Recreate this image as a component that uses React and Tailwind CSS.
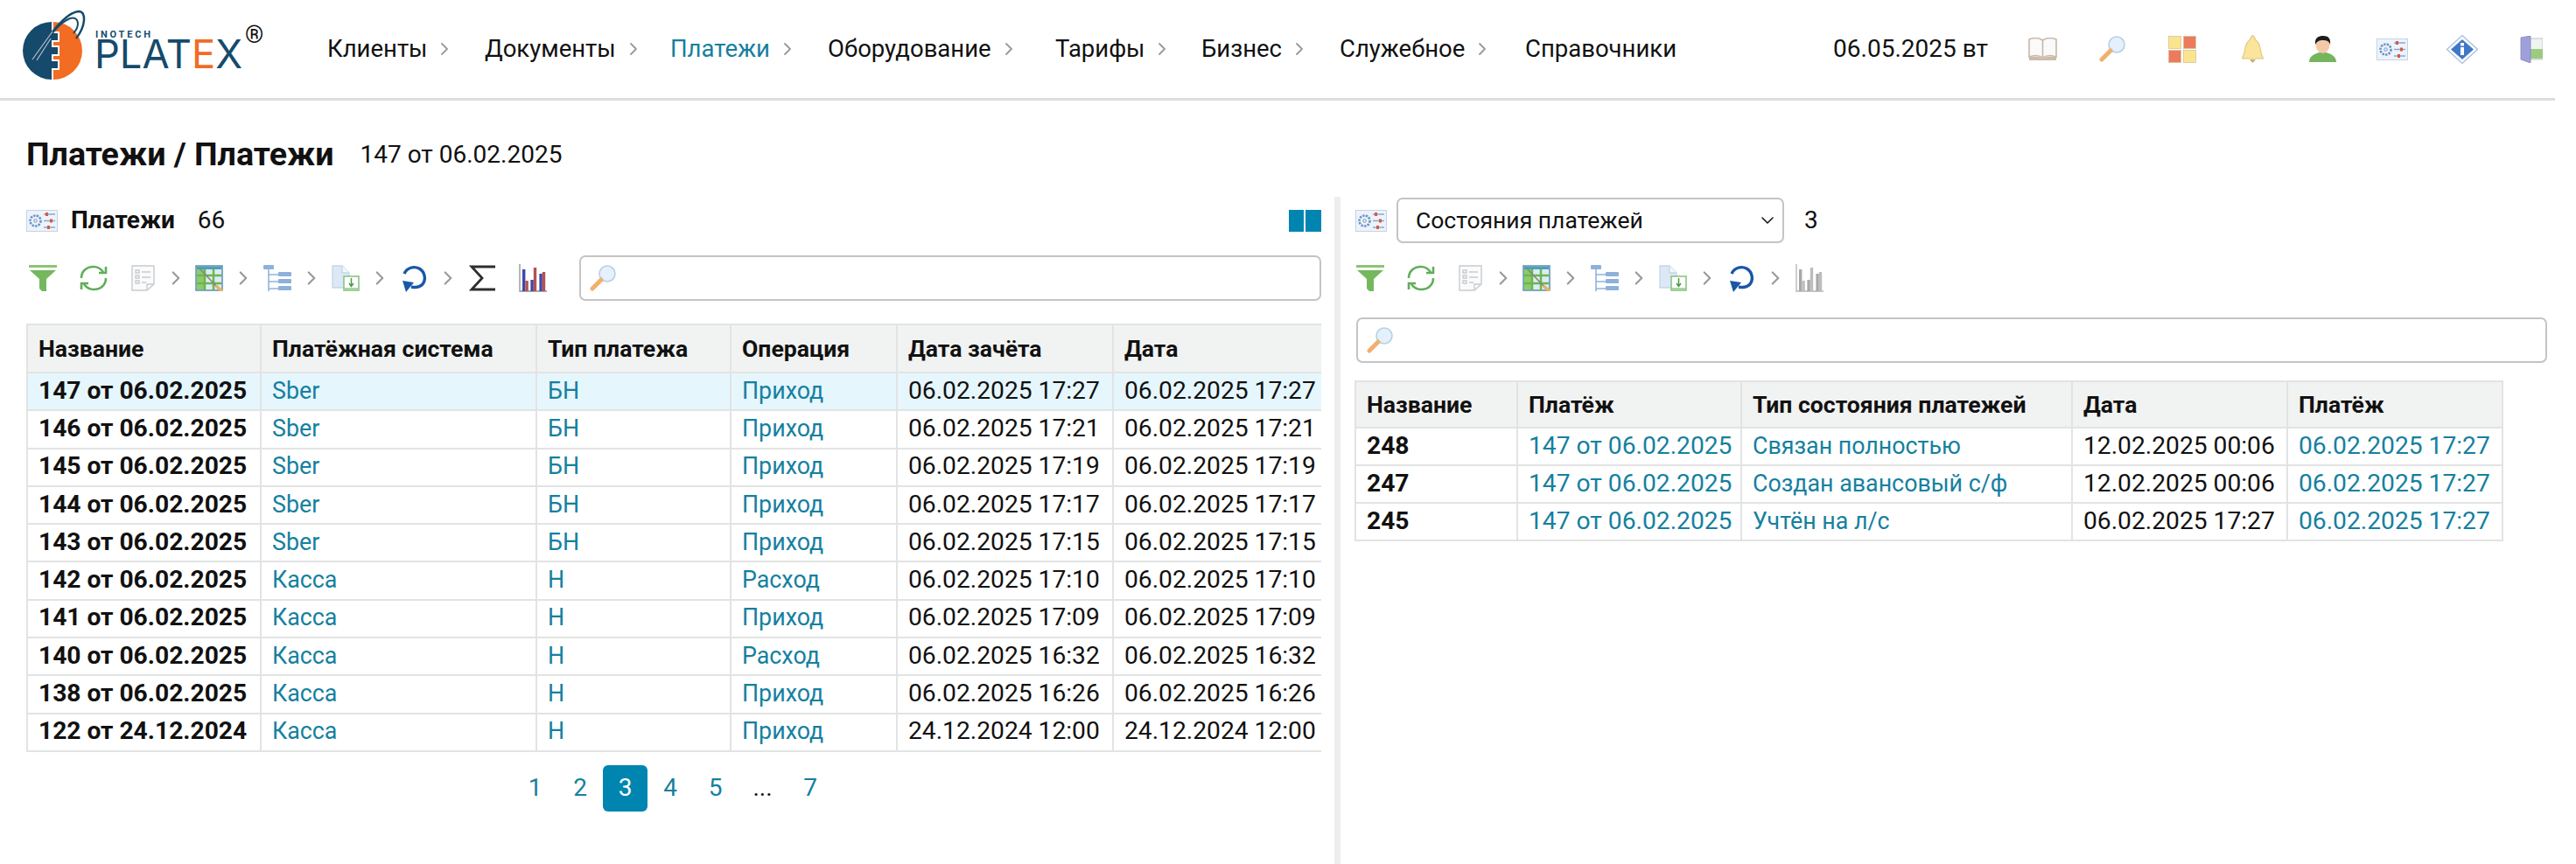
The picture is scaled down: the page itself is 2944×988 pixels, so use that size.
import { ChevronDown, ChevronRight } from 'lucide-react';

const navItems = [
    { label: 'Клиенты', width: 'w-[180px]' },
    { label: 'Документы', width: 'w-[212px]' },
    { label: 'Платежи', width: 'w-[180px]' },
    { label: 'Оборудование', width: 'w-[260px]' },
    { label: 'Тарифы', width: 'w-[167px]' },
    { label: 'Бизнес', width: 'w-[158px]' },
    { label: 'Служебное', width: 'w-[212px]' },
    { label: 'Справочники', width: '' },
];

const payments = [
    ['147 от 06.02.2025', 'Sber', 'БН', 'Приход', '06.02.2025 17:27'],
    ['146 от 06.02.2025', 'Sber', 'БН', 'Приход', '06.02.2025 17:21'],
    ['145 от 06.02.2025', 'Sber', 'БН', 'Приход', '06.02.2025 17:19'],
    ['144 от 06.02.2025', 'Sber', 'БН', 'Приход', '06.02.2025 17:17'],
    ['143 от 06.02.2025', 'Sber', 'БН', 'Приход', '06.02.2025 17:15'],
    ['142 от 06.02.2025', 'Касса', 'Н', 'Расход', '06.02.2025 17:10'],
    ['141 от 06.02.2025', 'Касса', 'Н', 'Приход', '06.02.2025 17:09'],
    ['140 от 06.02.2025', 'Касса', 'Н', 'Расход', '06.02.2025 16:32'],
    ['138 от 06.02.2025', 'Касса', 'Н', 'Приход', '06.02.2025 16:26'],
    ['122 от 24.12.2024', 'Касса', 'Н', 'Приход', '24.12.2024 12:00'],
];

const states = [
    ['248', 'Связан полностью', '12.02.2025 00:06'],
    ['247', 'Создан авансовый с/ф', '12.02.2025 00:06'],
    ['245', 'Учтён на л/с', '06.02.2025 17:27'],
];

const Logo = () => (
    <svg width="310" height="112" viewBox="0 0 310 112" className="shrink-0">
        <path d="M58 25 A33 33 0 0 0 58 91 V78 H65 V70 H58 V62 H65 V54 H58 V46 H65 V38 H58 Z" fill="#164a6c" transform="translate(1 0)" />
        <path d="M60 25 A33 33 0 0 1 60 91 V80 H67 V68 H60 V64 H67 V52 H60 V48 H67 V36 H60 Z" fill="#f26c24" transform="translate(1 0)" />
        <path d="M40 68 C54 40 76 14 90 13 C99 13 98 30 87 44" fill="none" stroke="#164a6c" strokeWidth="2.5" />
        <path d="M46 58 C58 38 70 25 80 21 C90 18 92 29 84 38" fill="none" stroke="#164a6c" strokeWidth="2" />
        <path d="M37 68 L60 36 M42 69 L58 44" stroke="#b4c0ca" strokeWidth="1.2" />
        <text x="109" y="43" fontFamily="Roboto, sans-serif" fontSize="11" fontWeight="700" fill="#164a6c" textLength="63" lengthAdjust="spacing">INOTECH</text>
        <text x="108" y="78" fontFamily="Inter, sans-serif" fontSize="45" fontWeight="400" fill="#164a6c" textLength="169" lengthAdjust="spacingAndGlyphs">PLAT<tspan fill="#f26c24">E</tspan>X</text>
        <text x="280" y="49" fontFamily="Roboto, sans-serif" fontSize="27" fill="#111">®</text>
    </svg>
);

const Funnel = () => (
    <svg width="32" height="30" viewBox="0 0 32 30">
        <rect x="0" y="0" width="32" height="3" fill="#8cc474" />
        <path d="M1 6 H31 L20 16 V30 L15 30 L12 27 V16 Z" fill="#74b85e" />
    </svg>
);

const Refresh = () => (
    <svg width="32" height="30" viewBox="0 0 32 30" fill="none" stroke="#5fae5a" strokeWidth="2.6">
        <path d="M2 15 C2 7 8 2 16 2 C20 2 24 4 27 8" />
        <path d="M30 15 C30 23 24 28 16 28 C12 28 8 26 5 22" />
        <path d="M30 2 V9 H22" />
        <path d="M2 28 V21 H10" />
    </svg>
);

const ListDoc = () => (
    <svg width="27" height="30" viewBox="0 0 27 30" fill="none" stroke="#c6ccd1" strokeWidth="1.4">
        <path d="M1 1 H26 V22 L18 29 H1 Z" fill="#fbfbfb" />
        <path d="M5 6 H9 V9 H5 Z M5 12 H9 V15 H5 Z M5 18 H9 V21 H5 Z M12 8 H22 M12 14 H22 M12 20 H17" />
        <path d="M18 29 V22 H26" />
    </svg>
);

const GridPencil = () => (
    <svg width="32" height="30" viewBox="0 0 32 30">
        <rect x="1" y="1" width="30" height="28" fill="#dcebf7" stroke="#5b8fb0" strokeWidth="1.5" />
        <rect x="2" y="2" width="28" height="3" fill="#4f9fb5" />
        <rect x="2" y="5" width="9" height="23" fill="#8ccb6a" />
        <path d="M11 5 V29 M21 5 V29 M2 12 H30 M2 21 H30" stroke="#6fb54a" strokeWidth="2.5" />
        <path d="M5 4 L26 26" stroke="#7d8a80" strokeWidth="1.6" />
        <path d="M24 24 L31 30" stroke="#e8b35e" strokeWidth="3.5" />
    </svg>
);

const Tree = () => (
    <svg width="32" height="30" viewBox="0 0 32 30">
        <path d="M6 3 V30 M6 11 H17 M6 19 H17 M6 27 H17" stroke="#8fb4dc" strokeWidth="1.6" fill="none" />
        <rect x="0" y="0" width="12" height="5" rx="1" fill="#8eb1dc" />
        <rect x="17" y="8" width="15" height="5" rx="1" fill="#8eb1dc" />
        <rect x="17" y="16" width="15" height="5" rx="1" fill="#8eb1dc" />
        <rect x="17" y="24" width="15" height="5" rx="1" fill="#8eb1dc" />
    </svg>
);

const ExportDoc = () => (
    <svg width="32" height="30" viewBox="0 0 32 30">
        <path d="M1 1 H12 L20 9 V26 H1 Z" fill="#dce8f6" stroke="#c4d6ea" strokeWidth="1.3" />
        <path d="M12 1 V9 H20" fill="#f5f8fc" stroke="#c4d6ea" strokeWidth="1.3" />
        <rect x="14" y="13" width="17" height="16" fill="#fff" stroke="#8ac482" strokeWidth="1.6" />
        <path d="M22.5 15 V24 M20 21 L22.5 24.5 L25 21" stroke="#4b9a4b" strokeWidth="1.5" fill="none" />
        <rect x="15" y="26" width="15" height="2" fill="#a9d6a0" />
    </svg>
);

const Redo = () => (
    <svg width="28" height="31" viewBox="0 0 28 31">
        <path d="M3 10 C6 3 14 1 20 4 C27 8 28 17 24 22 C20 26 15 26 11 25" fill="none" stroke="#1957a8" strokeWidth="3.4" />
        <path d="M1 18 L14 20 L5 31 Z" fill="#1957a8" />
    </svg>
);

const Sigma = () => (
    <svg width="30" height="30" viewBox="0 0 30 30" fill="none" stroke="#2e2e2e" strokeWidth="2.8">
        <path d="M30 2 H3 L15 15 L3 28 H30" />
    </svg>
);

const Bars = ({ grey }) => {
    const blue = grey ? '#a8a8a8' : '#3f48a8';
    const red = grey ? '#bdbdbd' : '#b2534e';
    return (
        <svg width="32" height="32" viewBox="0 0 32 32">
            <path d="M1 0 V31 H32" stroke={grey ? '#b4b4b4' : '#8a8f96'} strokeWidth="1.3" fill="none" />
            <rect x="4" y="6" width="3.4" height="25" fill={blue} />
            <rect x="7.4" y="19" width="3.4" height="12" fill={red} />
            <rect x="13.4" y="18" width="3.4" height="13" fill={blue} />
            <rect x="16.8" y="4" width="3.4" height="27" fill={red} />
            <rect x="23.4" y="11" width="3.4" height="20" fill={blue} />
            <rect x="26.8" y="9" width="3.4" height="22" fill={red} />
        </svg>
    );
};

const Magnifier = () => (
    <svg width="32" height="30" viewBox="0 0 32 30">
        <circle cx="21" cy="10" r="9" fill="#e4f0fb" stroke="#b6cfe6" strokeWidth="1.6" />
        <path d="M14 17 L4 27" stroke="#f0b070" strokeWidth="5" strokeLinecap="round" />
    </svg>
);

const Book = () => (
    <svg width="33" height="26" viewBox="0 0 33 26">
        <path d="M1 2 C6 0 12 0 16.5 3 C21 0 27 0 32 2 V22 C27 20 21 20 16.5 23 C12 20 6 20 1 22 Z" fill="#fafafa" stroke="#c8b8a8" strokeWidth="1.6" />
        <path d="M16.5 3 V23" stroke="#c8b8a8" strokeWidth="1.6" />
        <path d="M1 22 C6 21 12 21 16.5 24 C21 21 27 21 32 22 V26 H1 Z" fill="#cbbba8" />
    </svg>
);

const Tiles = () => (
    <svg width="32" height="31" viewBox="0 0 32 31" stroke="#d8c49a" strokeWidth="0.8">
        <rect x="0.5" y="0.5" width="14" height="14" fill="#fae58e" />
        <rect x="17.5" y="0.5" width="14" height="14" fill="#ec7a5c" />
        <rect x="0.5" y="16.5" width="14" height="14" fill="#ec7a5c" />
        <rect x="17.5" y="16.5" width="14" height="14" fill="#fae58e" />
    </svg>
);

const Bell = () => (
    <svg width="25" height="32" viewBox="0 0 25 32">
        <path d="M12.5 0.5 C15 2 15 5 16 6 C21 9 21 15 22 20 C22.5 23 24 25 24.5 27 H0.5 C1 25 2.5 23 3 20 C4 15 4 9 9 6 C10 5 10 2 12.5 0.5 Z" fill="#fbe59a" stroke="#e0c880" strokeWidth="1.2" />
        <path d="M9 28 H16 L12.5 32 Z" fill="#c9ad6c" />
    </svg>
);

const Person = () => (
    <svg width="31" height="30" viewBox="0 0 31 30">
        <path d="M0 30 C0 22 8 20 15.5 18 C23 20 31 22 31 30 Z" fill="#74b55e" />
        <ellipse cx="15.5" cy="10" rx="8" ry="10" fill="#f5c9a5" />
        <path d="M7 10 C6 2 11 0 16 0 C22 0 25 3 24 10 C23 6 20 5 15.5 5 C12 5 9 6 7 10 Z" fill="#1d1d1d" />
    </svg>
);

const Settings = () => (
    <svg width="36" height="25" viewBox="0 0 36 25" className="shrink-0">
        <rect x="0.5" y="0.5" width="35" height="24" fill="#edf3fb" stroke="#c4d3e6" />
        <circle cx="10.5" cy="12.5" r="6" fill="none" stroke="#6d93c6" strokeWidth="2.6" strokeDasharray="2.4 1.2" />
        <circle cx="10.5" cy="12.5" r="1.8" fill="none" stroke="#6d93c6" />
        <path d="M20 5 H33 M20 12.5 H33 M20 20 H33" stroke="#8fa9c9" strokeWidth="1.5" />
        <rect x="22" y="3" width="3" height="4" fill="#d9583f" />
        <rect x="27" y="10.5" width="3" height="4" fill="#d9583f" />
        <rect x="24" y="18" width="3" height="4" fill="#d9583f" />
    </svg>
);

const Info = () => (
    <svg width="36" height="33" viewBox="0 0 36 33">
        <path d="M18 0.5 L35.5 16.5 L18 32.5 L0.5 16.5 Z" fill="#fff" stroke="#a9c0dc" strokeWidth="1.3" />
        <path d="M18 5 L31 16.5 L18 28 L5 16.5 Z" fill="#3f78c8" />
        <rect x="16" y="9" width="4" height="3.5" fill="#fff" />
        <rect x="16" y="14" width="4" height="9" fill="#fff" />
    </svg>
);

const Door = () => (
    <svg width="26" height="31" viewBox="0 0 26 31" className="shrink-0">
        <rect x="10" y="3" width="16" height="24" fill="#eef5ef" stroke="#aeb8c4" strokeWidth="0.8" />
        <rect x="11" y="15" width="15" height="11" fill="#9ccb80" />
        <path d="M1 2 L12 0 V31 L1 27 Z" fill="#9f9fdc" stroke="#8484c0" strokeWidth="0.8" />
    </svg>
);

const Slot = ({ children }) => <span className="flex w-[32px] shrink-0 items-center justify-center">{children}</span>;

const Sep = () => (
    <span className="flex w-[46px] shrink-0 items-center justify-center">
        <ChevronRight size={26} strokeWidth={2} className="text-[#9a9a9a]" />
    </span>
);

const Toolbar = ({ full }) => (
    <div className="flex h-[52px] shrink-0 items-center">
        <Slot><Funnel /></Slot>
        <span className="w-[26px]" />
        <Slot><Refresh /></Slot>
        <span className="w-[24px]" />
        <Slot><ListDoc /></Slot>
        <span className="flex w-[44px] shrink-0 items-center justify-center">
            <ChevronRight size={26} strokeWidth={2} className="text-[#9a9a9a]" />
        </span>
        <Slot><GridPencil /></Slot>
        <Sep />
        <Slot><Tree /></Slot>
        <Sep />
        <Slot><ExportDoc /></Slot>
        <Sep />
        <Slot><Redo /></Slot>
        <Sep />
        {full && <Slot><Sigma /></Slot>}
        {full && <span className="w-[26px]" />}
        <Slot><Bars grey={!full} /></Slot>
    </div>
);

const SearchBox = ({ className }) => (
    <div className={`flex h-[52px] items-center rounded-[7px] border-2 border-[#c4c4c4] pl-[9px] ${className}`}>
        <Magnifier />
    </div>
);

const Th = ({ children }) => (
    <th className="border-2 border-[#e2e3e3] bg-[#f1f2f2] px-[12px] text-left text-[26.6px] leading-[40px] font-bold whitespace-nowrap">{children}</th>
);

const Td = ({ children, link, bold, num }) => (
    <td className={`border-2 border-[#e2e3e3] px-[12px] pb-[2px] leading-[38px] whitespace-nowrap ${num ? 'text-[28.2px]' : 'text-[26.8px]'} ${link ? 'text-[#15809f]' : 'text-[#111]'} ${bold ? 'font-bold' : ''}`}>
        {children}
    </td>
);

const App = () => {
    return (
        <div className="min-h-[988px] w-[2920px] overflow-hidden bg-white font-['Roboto',sans-serif] text-[#111]">
            <header className="flex h-[115px] items-center border-b-[3px] border-[#dcdcdc]">
                <div className="w-[374px] shrink-0">
                    <Logo />
                </div>
                <nav className="flex items-center text-[27.5px]">
                    {navItems.map((item, i) => (
                        <div key={item.label} className={`flex items-center ${item.width}`}>
                            <span className={item.label === 'Платежи' ? 'text-[#15809f]' : ''}>{item.label}</span>
                            {i < navItems.length - 1 && (
                                <ChevronRight size={24} strokeWidth={1.8} className="ml-[8px] text-[#999]" />
                            )}
                        </div>
                    ))}
                </nav>
                <div className="ml-auto flex items-center pr-[14px]">
                    <span className="mr-[22px] text-[28px]">06.05.2025 вт</span>
                    <span className="flex w-[80px] justify-center"><Book /></span>
                    <span className="flex w-[80px] justify-center"><Magnifier /></span>
                    <span className="flex w-[80px] justify-center"><Tiles /></span>
                    <span className="flex w-[80px] justify-center"><Bell /></span>
                    <span className="flex w-[80px] justify-center"><Person /></span>
                    <span className="flex w-[80px] justify-center"><Settings /></span>
                    <span className="flex w-[80px] justify-center"><Info /></span>
                    <span className="ml-[26px]"><Door /></span>
                </div>
            </header>

            <div className="flex h-[110px] items-center gap-[30px] pt-[13px] pl-[30px]">
                <h1 className="text-[37.6px] font-bold">Платежи / Платежи</h1>
                <span className="text-[28px]">147 от 06.02.2025</span>
            </div>

            <div className="flex h-[763px]">
                <section className="w-[1525px] shrink-0 pr-[15px] pl-[30px]">
                    <div className="flex h-[54px] items-center">
                        <Settings />
                        <span className="ml-[15px] text-[28px] font-bold">Платежи</span>
                        <span className="ml-[26px] text-[28px]">66</span>
                        <div className="ml-auto flex gap-[2px]">
                            <span className="h-[25px] w-[17px] bg-[#0085b0]" />
                            <span className="h-[25px] w-[18px] bg-[#0085b0]" />
                        </div>
                    </div>
                    <div className="mt-[13px] flex items-center pl-[3px]">
                        <Toolbar full />
                        <SearchBox className="ml-[37px] flex-1" />
                    </div>
                    <div className="mt-[26px] overflow-hidden">
                        <table className="w-[1560px] table-fixed border-collapse">
                            <colgroup>
                                <col className="w-[267px]" />
                                <col className="w-[315px]" />
                                <col className="w-[222px]" />
                                <col className="w-[190px]" />
                                <col className="w-[247px]" />
                                <col className="w-[319px]" />
                            </colgroup>
                            <thead>
                                <tr className="h-[55px]">
                                    <Th>Название</Th>
                                    <Th>Платёжная система</Th>
                                    <Th>Тип платежа</Th>
                                    <Th>Операция</Th>
                                    <Th>Дата зачёта</Th>
                                    <Th>Дата</Th>
                                </tr>
                            </thead>
                            <tbody>
                                {payments.map((p, i) => (
                                    <tr key={p[0]} className={i === 0 ? 'h-[43.3px] bg-[#e6f6fd]' : 'h-[43.3px]'}>
                                        <Td bold num>{p[0]}</Td>
                                        <Td link>{p[1]}</Td>
                                        <Td link>{p[2]}</Td>
                                        <Td link>{p[3]}</Td>
                                        <Td num>{p[4]}</Td>
                                        <Td num>{p[4]}</Td>
                                    </tr>
                                ))}
                            </tbody>
                        </table>
                    </div>
                    <div className="mt-[15px] ml-[556px] flex items-center text-[28px] text-[#15809f]">
                        <span className="w-[51px] text-center">1</span>
                        <span className="w-[52px] text-center">2</span>
                        <span className="flex h-[53px] w-[51px] items-center justify-center rounded-[6px] bg-[#0085b0] text-white">3</span>
                        <span className="w-[52px] text-center">4</span>
                        <span className="w-[51px] text-center">5</span>
                        <span className="w-[57px] text-center text-[#111]">...</span>
                        <span className="w-[52px] text-center">7</span>
                    </div>
                </section>

                <div className="w-[7px] shrink-0 bg-[#eeeeee]" />

                <section className="flex-1 pt-[1px] pr-[9px] pl-[16px]">
                    <div className="flex h-[52px] items-center pl-[1px]">
                        <Settings />
                        <div className="ml-[11px] flex h-[52px] w-[443px] items-center justify-between rounded-[7px] border-2 border-[#c4c4c4] pr-[5px] pl-[20px] text-[26.5px]">
                            Состояния платежей
                            <ChevronDown size={24} strokeWidth={1.5} />
                        </div>
                        <span className="ml-[23px] text-[28px]">3</span>
                    </div>
                    <div className="mt-[14px] pl-[2px]">
                        <Toolbar />
                    </div>
                    <SearchBox className="mt-[19px] ml-[2px]" />
                    <table className="mt-[20px] w-[1311px] table-fixed border-collapse">
                        <colgroup>
                            <col className="w-[185px]" />
                            <col className="w-[256px]" />
                            <col className="w-[378px]" />
                            <col className="w-[246px]" />
                            <col className="w-[246px]" />
                        </colgroup>
                        <thead>
                            <tr className="h-[53px]">
                                <Th>Название</Th>
                                <Th>Платёж</Th>
                                <Th>Тип состояния платежей</Th>
                                <Th>Дата</Th>
                                <Th>Платёж</Th>
                            </tr>
                        </thead>
                        <tbody>
                            {states.map((s) => (
                                <tr key={s[0]} className="h-[43px]">
                                    <Td bold num>{s[0]}</Td>
                                    <Td link num>147 от 06.02.2025</Td>
                                    <Td link>{s[1]}</Td>
                                    <Td num>{s[2]}</Td>
                                    <Td link num>06.02.2025 17:27</Td>
                                </tr>
                            ))}
                        </tbody>
                    </table>
                </section>
            </div>
        </div>
    );
};

export default App;
